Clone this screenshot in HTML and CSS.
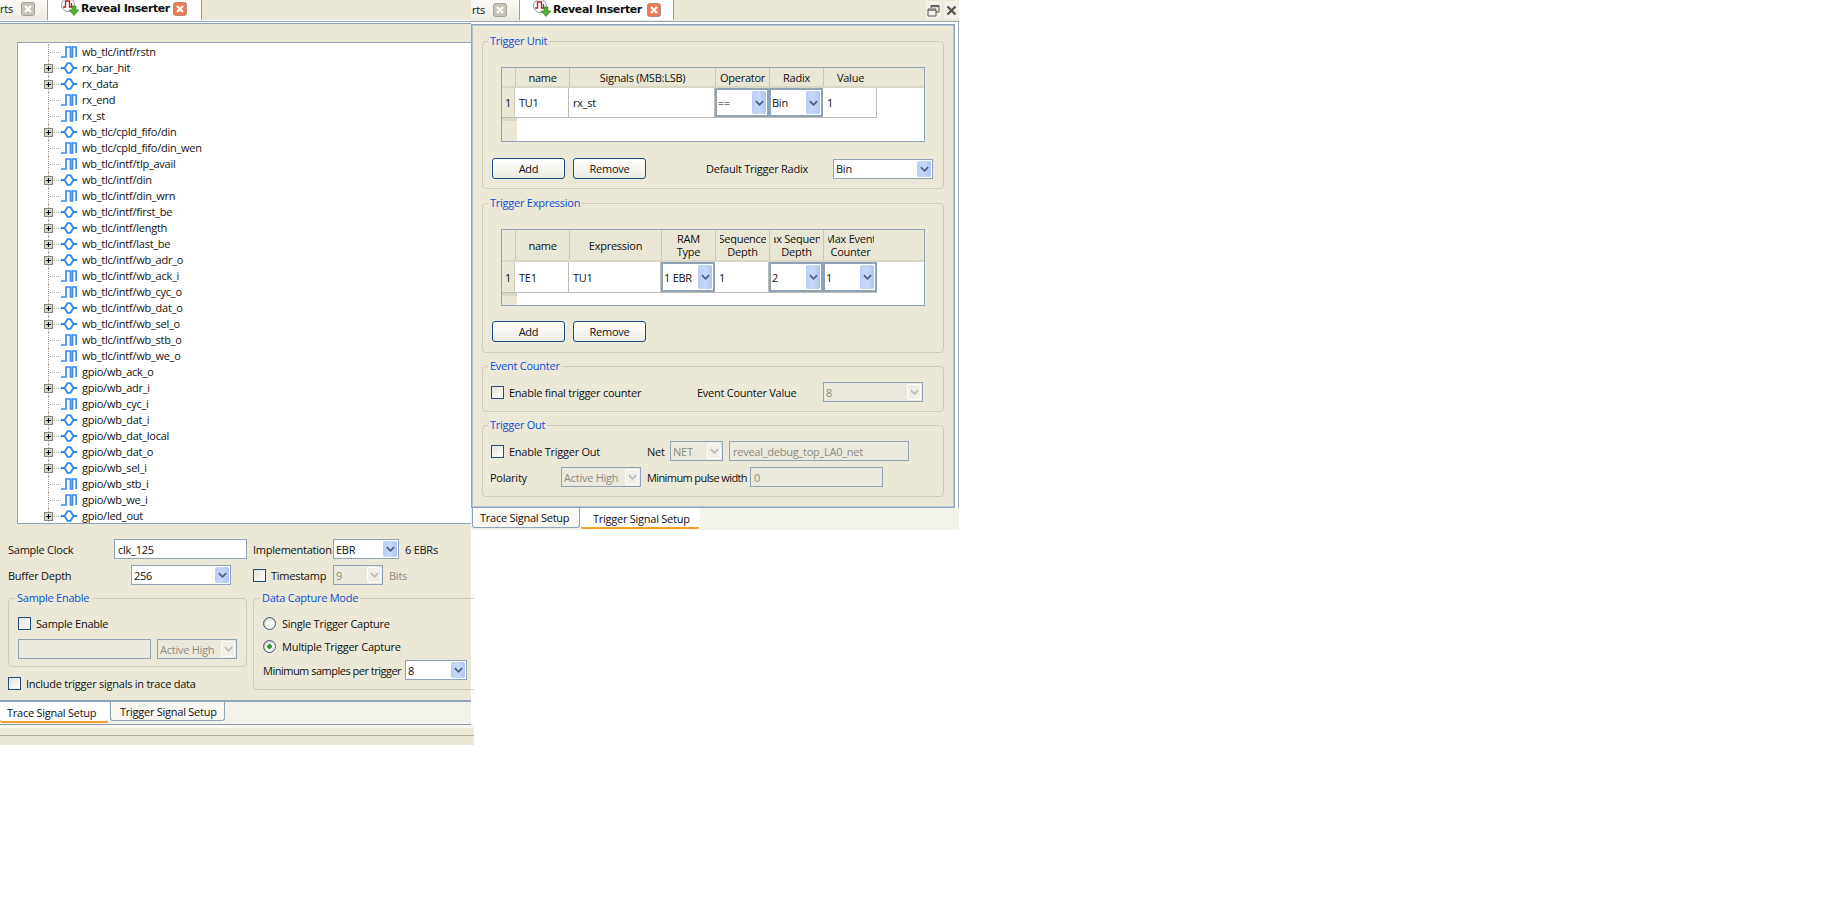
FILE: index.html
```html
<!DOCTYPE html>
<html>
<head>
<meta charset="utf-8">
<title>Reveal Inserter</title>
<link rel="stylesheet" href="styles.css">
</head>
<body>
<svg class="defs" width="0" height="0">
  <defs>
    <symbol id="pulse" viewBox="0 0 16 12"><path d="M0 11H5V1H9.500V11H11.500V1H15.200V11" fill="none" stroke="#3a8be8" stroke-width="1.7"/></symbol>
    <symbol id="bus" viewBox="0 0 16 12"><path d="M0 6H3.500M12.500 6H16M3.500 6L6.500 1.200H9.500L12.500 6L9.500 10.800H6.500Z" fill="none" stroke="#2f8ae8" stroke-width="1.800"/></symbol>
    <symbol id="plus" viewBox="0 0 9 9"><rect x=".5" y=".5" width="8" height="8" fill="#d8d6ca" stroke="#85857d"/><path d="M2 4.500H7M4.500 2V7" stroke="#000"/></symbol>
    <symbol id="chev" viewBox="0 0 10 6"><path d="M1 1L5 5L9 1" fill="none" stroke="#4d6185" stroke-width="2"/></symbol>
    <symbol id="closex" viewBox="0 0 14 14"><rect x=".5" y=".5" width="13" height="13" rx="2" fill="currentColor" stroke="#00000040"/><path d="M4 4L10 10M10 4L4 10" stroke="#fff" stroke-width="2.200"/></symbol>
    <symbol id="logo" viewBox="0 0 18 18"><circle cx="7" cy="7" r="6.500" fill="#fff" stroke="#8a9bb0"/><path d="M2 9H4.500V3H8.500V9H10.500V5" fill="none" stroke="#b02020" stroke-width="1.300"/><path d="M11 8H15V12H18L13 17.500L8 12H11Z" fill="#58b030" stroke="#2d7a1a" stroke-width=".6"/></symbol>
  </defs>
</svg>

<section class="window window-left">
  <header class="tabbar">
    <div class="tab tab-off left-off"><span>rts</span><svg class="tabx off"><use href="#closex"/></svg></div>
    <div class="tab tab-on"><svg class="logo"><use href="#logo"/></svg><b>Reveal Inserter</b><svg class="tabx on"><use href="#closex"/></svg></div>
  </header>
  <div class="rule"></div>
  <div class="body-left">
    <div class="tree">
      <div class="row"><span class="node"></span><svg class="sig"><use href="#pulse"/></svg><span class="sname">wb_tlc/intf/rstn</span></div>
      <div class="row"><span class="node"><svg class="plus"><use href="#plus"/></svg></span><svg class="sig"><use href="#bus"/></svg><span class="sname">rx_bar_hit</span></div>
      <div class="row"><span class="node"><svg class="plus"><use href="#plus"/></svg></span><svg class="sig"><use href="#bus"/></svg><span class="sname">rx_data</span></div>
      <div class="row"><span class="node"></span><svg class="sig"><use href="#pulse"/></svg><span class="sname">rx_end</span></div>
      <div class="row"><span class="node"></span><svg class="sig"><use href="#pulse"/></svg><span class="sname">rx_st</span></div>
      <div class="row"><span class="node"><svg class="plus"><use href="#plus"/></svg></span><svg class="sig"><use href="#bus"/></svg><span class="sname">wb_tlc/cpld_fifo/din</span></div>
      <div class="row"><span class="node"></span><svg class="sig"><use href="#pulse"/></svg><span class="sname">wb_tlc/cpld_fifo/din_wen</span></div>
      <div class="row"><span class="node"></span><svg class="sig"><use href="#pulse"/></svg><span class="sname">wb_tlc/intf/tlp_avail</span></div>
      <div class="row"><span class="node"><svg class="plus"><use href="#plus"/></svg></span><svg class="sig"><use href="#bus"/></svg><span class="sname">wb_tlc/intf/din</span></div>
      <div class="row"><span class="node"></span><svg class="sig"><use href="#pulse"/></svg><span class="sname">wb_tlc/intf/din_wrn</span></div>
      <div class="row"><span class="node"><svg class="plus"><use href="#plus"/></svg></span><svg class="sig"><use href="#bus"/></svg><span class="sname">wb_tlc/intf/first_be</span></div>
      <div class="row"><span class="node"><svg class="plus"><use href="#plus"/></svg></span><svg class="sig"><use href="#bus"/></svg><span class="sname">wb_tlc/intf/length</span></div>
      <div class="row"><span class="node"><svg class="plus"><use href="#plus"/></svg></span><svg class="sig"><use href="#bus"/></svg><span class="sname">wb_tlc/intf/last_be</span></div>
      <div class="row"><span class="node"><svg class="plus"><use href="#plus"/></svg></span><svg class="sig"><use href="#bus"/></svg><span class="sname">wb_tlc/intf/wb_adr_o</span></div>
      <div class="row"><span class="node"></span><svg class="sig"><use href="#pulse"/></svg><span class="sname">wb_tlc/intf/wb_ack_i</span></div>
      <div class="row"><span class="node"></span><svg class="sig"><use href="#pulse"/></svg><span class="sname">wb_tlc/intf/wb_cyc_o</span></div>
      <div class="row"><span class="node"><svg class="plus"><use href="#plus"/></svg></span><svg class="sig"><use href="#bus"/></svg><span class="sname">wb_tlc/intf/wb_dat_o</span></div>
      <div class="row"><span class="node"><svg class="plus"><use href="#plus"/></svg></span><svg class="sig"><use href="#bus"/></svg><span class="sname">wb_tlc/intf/wb_sel_o</span></div>
      <div class="row"><span class="node"></span><svg class="sig"><use href="#pulse"/></svg><span class="sname">wb_tlc/intf/wb_stb_o</span></div>
      <div class="row"><span class="node"></span><svg class="sig"><use href="#pulse"/></svg><span class="sname">wb_tlc/intf/wb_we_o</span></div>
      <div class="row"><span class="node"></span><svg class="sig"><use href="#pulse"/></svg><span class="sname">gpio/wb_ack_o</span></div>
      <div class="row"><span class="node"><svg class="plus"><use href="#plus"/></svg></span><svg class="sig"><use href="#bus"/></svg><span class="sname">gpio/wb_adr_i</span></div>
      <div class="row"><span class="node"></span><svg class="sig"><use href="#pulse"/></svg><span class="sname">gpio/wb_cyc_i</span></div>
      <div class="row"><span class="node"><svg class="plus"><use href="#plus"/></svg></span><svg class="sig"><use href="#bus"/></svg><span class="sname">gpio/wb_dat_i</span></div>
      <div class="row"><span class="node"><svg class="plus"><use href="#plus"/></svg></span><svg class="sig"><use href="#bus"/></svg><span class="sname">gpio/wb_dat_local</span></div>
      <div class="row"><span class="node"><svg class="plus"><use href="#plus"/></svg></span><svg class="sig"><use href="#bus"/></svg><span class="sname">gpio/wb_dat_o</span></div>
      <div class="row"><span class="node"><svg class="plus"><use href="#plus"/></svg></span><svg class="sig"><use href="#bus"/></svg><span class="sname">gpio/wb_sel_i</span></div>
      <div class="row"><span class="node"></span><svg class="sig"><use href="#pulse"/></svg><span class="sname">gpio/wb_stb_i</span></div>
      <div class="row"><span class="node"></span><svg class="sig"><use href="#pulse"/></svg><span class="sname">gpio/wb_we_i</span></div>
      <div class="row"><span class="node"><svg class="plus"><use href="#plus"/></svg></span><svg class="sig"><use href="#bus"/></svg><span class="sname">gpio/led_out</span></div>
    </div>

    <div class="settings">
      <div class="set-line line-one">
        <label class="lab-clock">Sample Clock</label>
        <div class="field w-clock">clk_125</div>
        <label class="lab-impl">Implementation</label>
        <div class="combo w-impl"><span>EBR</span><i class="arrow"><svg><use href="#chev"/></svg></i></div>
        <span class="ebrs">6 EBRs</span>
      </div>
      <div class="set-line line-two">
        <label class="lab-depth">Buffer Depth</label>
        <div class="combo w-depth"><span>256</span><i class="arrow"><svg><use href="#chev"/></svg></i></div>
        <i class="check chk-ts"></i><label class="lab-ts">Timestamp</label>
        <div class="combo off w-ts"><span>9</span><i class="arrow"><svg><use href="#chev"/></svg></i></div>
        <span class="muted">Bits</span>
      </div>
      <div class="set-groups">
        <div class="col-a">
          <fieldset class="grp grp-se">
            <legend>Sample Enable</legend>
            <div class="inline se-one"><i class="check"></i><label>Sample Enable</label></div>
            <div class="inline se-two"><div class="field off w-se"></div><div class="combo off w-ah"><span>Active High</span><i class="arrow"><svg><use href="#chev"/></svg></i></div></div>
          </fieldset>
          <div class="inline incl"><i class="check"></i><label>Include trigger signals in trace data</label></div>
        </div>
        <fieldset class="grp grp-dc">
          <legend>Data Capture Mode</legend>
          <div class="inline radio-row radio-one"><i class="radio"></i><label>Single Trigger Capture</label></div>
          <div class="inline radio-row radio-two"><i class="radio on"></i><label>Multiple Trigger Capture</label></div>
          <div class="inline min-row"><label class="lab-min">Minimum samples per trigger</label><div class="combo w-min"><span>8</span><i class="arrow"><svg><use href="#chev"/></svg></i></div></div>
        </fieldset>
      </div>
    </div>
  </div>
  <div class="bottom-tabs btabs-left">
    <div class="btab active">Trace Signal Setup</div>
    <div class="btab">Trigger Signal Setup</div>
  </div>
  <div class="status"><div class="status-line"></div></div>
</section>

<section class="window window-right">
  <header class="tabbar">
    <div class="tab tab-off right-off"><span>rts</span><svg class="tabx off"><use href="#closex"/></svg></div>
    <div class="tab tab-on"><svg class="logo"><use href="#logo"/></svg><b>Reveal Inserter</b><svg class="tabx on"><use href="#closex"/></svg></div>
    <div class="winbtns">
      <button class="winbtn"><svg width="13" height="13" viewBox="0 0 13 13"><path d="M4 4V1.500H12V8H9M1 5H9V12H1ZM1 6.200H9M4 2.700H12" fill="none" stroke="#555"/></svg></button>
      <button class="winbtn"><svg width="13" height="13" viewBox="0 0 13 13"><path d="M2.500 2.500L10.500 10.500M10.500 2.500L2.500 10.500" stroke="#555" stroke-width="2.400"/></svg></button>
    </div>
  </header>
  <div class="frame">
    <div class="frame-in">
      <fieldset class="grp tu">
        <legend>Trigger Unit</legend>
        <div class="table t-unit">
          <div class="thead h-one">
            <div class="c-idx"></div><div class="th c-name">name</div><div class="th c-sig">Signals (MSB:LSB)</div><div class="th c-n">Operator</div><div class="th c-n">Radix</div><div class="th c-n">Value</div>
          </div>
          <div class="trow r-one">
            <div class="c-idx idx">1</div><div class="td c-name">TU1</div><div class="td c-sig">rx_st</div>
            <div class="combo cell c-n"><span>==</span><i class="arrow"><svg><use href="#chev"/></svg></i></div>
            <div class="combo cell c-n"><span>Bin</span><i class="arrow"><svg><use href="#chev"/></svg></i></div>
            <div class="td c-n">1</div>
          </div>
          <div class="tfill f-one"><div class="c-idx stub"></div></div>
        </div>
        <div class="inline actions">
          <button class="btn">Add</button><button class="btn">Remove</button>
          <label class="lab-radix">Default Trigger Radix</label>
          <div class="combo w-radix"><span>Bin</span><i class="arrow"><svg><use href="#chev"/></svg></i></div>
        </div>
      </fieldset>
      <fieldset class="grp te">
        <legend>Trigger Expression</legend>
        <div class="table t-expr">
          <div class="thead h-two">
            <div class="c-idx"></div><div class="th c-name">name</div><div class="th c-expr">Expression</div><div class="th c-n">RAM<br>Type</div><div class="th c-n clip"><span>Sequence</span><span>Depth</span></div><div class="th c-n clip"><span>Max Sequence</span><span>Depth</span></div><div class="th c-n clip"><span>Max Event</span><span>Counter</span></div>
          </div>
          <div class="trow r-two">
            <div class="c-idx idx">1</div><div class="td c-name">TE1</div><div class="td c-expr">TU1</div>
            <div class="combo cell c-n"><span>1 EBR</span><i class="arrow"><svg><use href="#chev"/></svg></i></div>
            <div class="td c-n">1</div>
            <div class="combo cell c-n"><span>2</span><i class="arrow"><svg><use href="#chev"/></svg></i></div>
            <div class="combo cell c-n"><span>1</span><i class="arrow"><svg><use href="#chev"/></svg></i></div>
          </div>
          <div class="tfill f-two"><div class="c-idx stub"></div></div>
        </div>
        <div class="inline actions actions-te"><button class="btn">Add</button><button class="btn">Remove</button></div>
      </fieldset>
      <fieldset class="grp ec">
        <legend>Event Counter</legend>
        <div class="inline ec-row">
          <i class="check"></i><label class="lab-final">Enable final trigger counter</label>
          <label class="lab-ecv">Event Counter Value</label>
          <div class="combo off w-ecv"><span>8</span><i class="arrow"><svg><use href="#chev"/></svg></i></div>
        </div>
      </fieldset>
      <fieldset class="grp to">
        <legend>Trigger Out</legend>
        <div class="inline to-one">
          <i class="check"></i><label class="lab-eto">Enable Trigger Out</label>
          <label class="lab-net">Net</label>
          <div class="combo off w-net"><span>NET</span><i class="arrow"><svg><use href="#chev"/></svg></i></div>
          <div class="field off w-netname">reveal_debug_top_LA0_net</div>
        </div>
        <div class="inline to-two">
          <label class="lab-pol">Polarity</label>
          <div class="combo off w-pol"><span>Active High</span><i class="arrow"><svg><use href="#chev"/></svg></i></div>
          <label class="lab-mpw">Minimum pulse width</label>
          <div class="field off w-mpw">0</div>
        </div>
      </fieldset>
    </div>
  </div>
  <div class="bottom-tabs btabs-right">
    <div class="btab">Trace Signal Setup</div>
    <div class="btab active">Trigger Signal Setup</div>
  </div>
</section>
</body>
</html>
```

FILE: styles.css
```css
html, body { margin: 0; padding: 0; background: #fff; }
body { position: relative; width: 1844px; height: 905px; overflow: hidden; font: 11px "Open Sans", Tahoma, sans-serif; letter-spacing: -0.25px; color: #111; }
.defs { position: absolute; }
svg { display: block; }
i { display: block; font-style: normal; }
label { white-space: nowrap; }

.window { position: absolute; top: 0; overflow: hidden; }
.window-left { left: 0; width: 474px; height: 745px; }
.window-right { left: 471px; width: 488px; height: 530px; background: #ebe8d8; }

.tabbar { display: flex; height: 20px; align-items: stretch; background: #ebe8d8; }
.window-left .tabbar { width: 471px; }
.tab { display: flex; align-items: center; box-sizing: border-box; height: 20px; border-right: 1px solid #8fa3b8; flex: none; }
.tab-off { background: linear-gradient(#fbfaf6, #ecebe4); }
.tab-off span { flex: none; }
.left-off { width: 48px; }
.left-off span { width: 21px; }
.right-off { width: 49px; }
.right-off span { width: 22px; padding-left: 1px; box-sizing: border-box; }
.tab-on { background: #fff; width: 154px; padding-left: 13px; }
.window-left .tab { padding-bottom: 3px; }
.window-right .tab { padding-bottom: 1px; }
.tab-on b { font: bold 11px "DejaVu Sans", sans-serif; letter-spacing: -0.42px; margin-left: 2px; width: 89px; white-space: nowrap; flex: none; }
.logo { width: 18px; height: 18px; margin-top: -3px; flex: none; }
.tabx { width: 14px; height: 14px; flex: none; }
.tabx.off { color: #c8c4b4; }
.tabx.on { color: #ee7a55; margin-left: 3px; }
.window-right .tabx.on { margin-left: 5px; }
.winbtns { margin-left: auto; display: flex; gap: 3px; }
.winbtn { width: 15px; height: 18px; margin-top: 1px; padding: 2px 1px; border: 0; background: #f3f1e8; }

.rule { height: 3px; width: 471px; box-sizing: border-box; margin-top: 1px; border-top: 1px solid #8fa3b8; border-bottom: 1px solid #8fa3b8; background: #fff; }

.body-left { box-sizing: border-box; width: 471px; height: 676px; padding-top: 18px; background: #ebe8d8; }
.tree { box-sizing: border-box; height: 482px; margin-left: 17px; border: 1px solid #8fa3b8; border-right: 0; background: #fff; padding-top: 1px; overflow: hidden; }
.row { display: flex; align-items: center; height: 16px; white-space: nowrap; position: relative; padding-left: 26px; }
.row::before { content: ""; position: absolute; left: 30px; top: 0; bottom: 0; border-left: 1px dotted #a8a89c; }
.row::after { content: ""; position: absolute; left: 31px; top: 8px; width: 12px; border-top: 1px dotted #b8b8ae; }
.node { width: 17px; height: 16px; display: flex; align-items: center; flex: none; }
.plus { width: 9px; height: 9px; flex: none; position: relative; z-index: 1; }
.sig { width: 16px; height: 12px; flex: none; margin-right: 5px; }
.sname { margin-top: -2px; }

.settings { padding-left: 8px; }
.set-line { display: flex; align-items: center; height: 20px; }
.line-one { margin-top: 15px; }
.line-two { margin-top: 6px; }
.lab-clock { width: 106px; flex: none; }
.lab-depth { width: 123px; flex: none; }
.lab-impl { margin-left: 6px; width: 80px; flex: none; }
.ebrs { margin-left: 6px; }
.chk-ts { margin-left: 22px; margin-right: 5px; }
.lab-ts { width: 62px; flex: none; }
.muted { color: #8b8b80; margin-left: 6px; }

.field, .combo { box-sizing: border-box; border: 1px solid #8fa3b8; background: #fff; height: 20px; display: flex; align-items: center; flex: none; white-space: nowrap; overflow: hidden; }
.field { padding-left: 3px; }
.combo { justify-content: space-between; padding: 1px 1px 1px 2px; }
.combo span { overflow: hidden; }
.arrow { width: 14px; height: 16px; flex: none; border-radius: 2px; background: linear-gradient(90deg, #b9cdf6, #c8d8fa 50%, #aec5f3); display: flex; align-items: center; justify-content: center; }
.arrow svg { width: 9px; height: 6px; }
.field.off, .combo.off { background: #ebe9de; color: #8b8b80; }
.combo.off .arrow { background: #f1efe6; border: 1px solid #fff; box-sizing: border-box; }
.combo.off .arrow svg { opacity: .35; }

.w-clock { width: 133px; }
.w-impl { width: 66px; }
.w-depth { width: 100px; }
.w-ts { width: 50px; }
.w-se { width: 133px; }
.w-ah { width: 80px; margin-left: 6px; }
.w-min { width: 62px; }

.check { box-sizing: border-box; width: 13px; height: 13px; border: 1px solid #1c4f80; background: linear-gradient(135deg, #e4e2d6, #fff); flex: none; }
.radio { box-sizing: border-box; width: 13px; height: 13px; border: 1px solid #3b5a7c; border-radius: 50%; background: #f6f5ee; flex: none; box-shadow: inset 1px 1px 1px #c8c6b8; }
.radio.on { background: radial-gradient(circle, #2e9e44 0 2px, #f6f5ee 2.800px); }
.inline { display: flex; align-items: center; }
.inline .check + label { margin-left: 5px; }

.grp { box-sizing: border-box; margin: 0; padding: 0; border: 1px solid #cfccbb; border-radius: 4px; min-width: 0; }
.grp legend { color: #0b4fd0; padding: 0 2px; margin-left: 6px; line-height: 14px; white-space: nowrap; }
.frame-in .grp legend { margin-left: 5px; }

.set-groups { display: flex; margin-top: 6px; gap: 6px; }
.col-a { width: 239px; flex: none; }
.grp-se { height: 76px; }
.se-one { margin: 11px 0 0 9px; }
.se-two { margin: 8px 0 0 9px; }
.incl { margin-top: 9px; }
.grp-dc { width: 225px; height: 99px; flex: none; }
.radio-row { height: 22px; margin-left: 9px; gap: 6px; }
.radio-one { margin-top: 7px; }
.radio-two { margin-top: 1px; }
.min-row { margin: 3px 0 0 9px; }
.lab-min { width: 142px; flex: none; letter-spacing: -0.5px; }

.bottom-tabs { display: flex; background: #f3f2eb; box-sizing: border-box; align-items: flex-start; }
.btab { box-sizing: border-box; height: 19px; background: #f8f7f1; border: 1px solid #8fa3b8; border-top: 0; display: flex; align-items: center; white-space: nowrap; border-radius: 0 0 3px 3px; flex: none; }
.btab.active { background: #fff; border-color: #fff; border-bottom: 2px solid #f5a030; }
.btabs-left { width: 471px; height: 25px; border-top: 2px solid #8fa3b8; border-bottom: 1px solid #8a98a8; }
.btabs-left .btab.active { width: 109px; height: 21px; padding: 2px 0 0 7px; border-left: 0; }
.btabs-left .btab:not(.active) { width: 115px; padding-left: 9px; margin-left: 1px; }
.btabs-right { height: 22px; padding-left: 1px; }
.btabs-right .btab:not(.active) { width: 108px; height: 20px; padding-left: 7px; }
.btabs-right .btab.active { width: 120px; height: 21px; padding: 1px 0 0 12px; }

.status { box-sizing: border-box; height: 20px; background: #ebe8d8; border-top: 3px solid #f8f8f2; padding-top: 7px; }
.status-line { border-top: 1px solid #b0ad9b; }

.frame { box-sizing: border-box; height: 487px; margin-top: 1px; border-top: 1px solid #9aa6b0; border-right: 1px solid #9aa6b0; padding: 2px 3px 0 0; background: #fff; }
.frame-in { box-sizing: border-box; width: 484px; height: 484px; border: 1px solid #8fa3b8; box-shadow: inset 0 0 0 1px #b4c6d6; background: #ebe8d8; padding: 9px 0 0 10px; }
.frame-in .grp { width: 462px; }

.table { box-sizing: border-box; margin: 19px 0 0 18px; width: 424px; border: 1px solid #8fa3b8; background: #fff; }
.thead { display: flex; background: #e9e6d6; align-items: stretch; box-sizing: border-box; border-bottom: 2px solid #d9d6c6; }
.h-one { height: 20px; }
.h-two { height: 32px; }
.trow { display: flex; align-items: stretch; box-sizing: border-box; width: 375px; border-bottom: 1px solid #bdbdb5; }
.r-one { height: 30px; }
.r-two { height: 31px; }
.c-idx { width: 13px; flex: none; box-sizing: border-box; }
.idx { background: #e9e6d6; padding-right: 3px; display: flex; align-items: center; justify-content: flex-end; border-right: 1px solid #cfccbb; }
.c-name { width: 54px; flex: none; box-sizing: border-box; }
.c-sig { width: 146px; flex: none; box-sizing: border-box; }
.c-expr { width: 92px; flex: none; box-sizing: border-box; }
.c-n { width: 54px; flex: none; box-sizing: border-box; }
.th { border-left: 1px solid #c9c6b6; display: flex; flex-direction: column; justify-content: center; align-items: center; text-align: center; line-height: 13px; overflow: hidden; white-space: nowrap; }
.clip span { width: 46px; overflow: hidden; display: flex; justify-content: center; }
.td { border-right: 1px solid #bdbdb5; padding-left: 4px; display: flex; align-items: center; background: #fff; }
.combo.cell { height: auto; border-width: 2px; padding: 1px; }
.combo.cell .arrow { height: auto; align-self: stretch; }
.f-one { height: 23px; }
.f-two { height: 12px; }
.stub { height: 100%; background: #e9e6d6; border-top: 3px solid #d9d6c6; width: 15px; }

.tu { height: 155px; }
.te { height: 157px; margin-top: 7px; }
.ec { height: 53px; margin-top: 6px; }
.to { height: 79px; margin-top: 6px; }

.actions { margin: 16px 0 0 9px; }
.actions-te { margin-top: 15px; }
.btn { box-sizing: border-box; width: 73px; height: 21px; font: inherit; letter-spacing: inherit; color: #111; border: 1px solid #1c4f80; border-radius: 3px; background: linear-gradient(#fff, #ecebe2); margin-right: 8px; padding: 0; flex: none; }
.lab-radix { margin-left: 52px; width: 127px; flex: none; }
.w-radix { width: 100px; }

.ec-row { margin: 9px 0 0 8px; height: 20px; }
.lab-final { width: 183px; flex: none; }
.inline .check + .lab-final { margin-right: 5px; }
.lab-ecv { width: 126px; flex: none; }
.w-ecv { width: 100px; }

.to-one { margin: 9px 0 0 8px; height: 20px; }
.lab-eto { width: 138px; flex: none; }
.lab-net { width: 23px; flex: none; }
.w-net { width: 53px; }
.w-netname { width: 180px; margin-left: 6px; }
.to-two { margin: 6px 0 0 7px; height: 20px; }
.lab-pol { width: 71px; flex: none; }
.w-pol { width: 80px; }
.lab-mpw { margin-left: 6px; width: 103px; flex: none; letter-spacing: -0.6px; }
.w-mpw { width: 133px; }
```
